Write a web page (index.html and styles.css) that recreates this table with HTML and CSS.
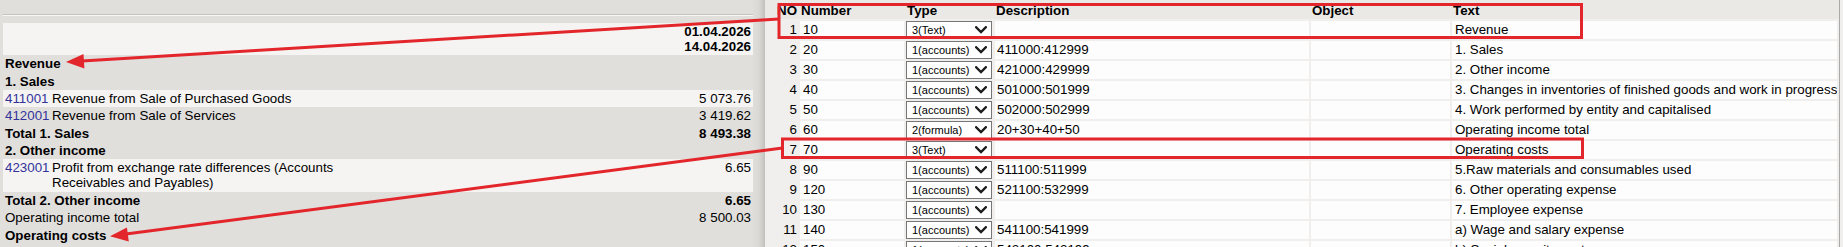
FILE: index.html
```html
<!DOCTYPE html>
<html lang="en">
<head>
<meta charset="utf-8">
<title>Report setup</title>
<link rel="stylesheet" href="styles.css">
</head>
<body>
<div class="page">
  <section class="report">
    <div class="report-inner">
      <div class="report-head"></div>
      <div class="rule"></div>
      <div class="dates band">
        <div>01.04.2026</div>
        <div>14.04.2026</div>
      </div>
      <div class="line b">Revenue</div>
      <div class="line b">1. Sales</div>
      <div class="line acc band"><span class="code">411001</span><span class="desc">Revenue from Sale of Purchased Goods</span><span class="val">5 073.76</span></div>
      <div class="line acc"><span class="code">412001</span><span class="desc">Revenue from Sale of Services</span><span class="val">3 419.62</span></div>
      <div class="line acc b"><span class="span2">Total 1. Sales</span><span class="val">8 493.38</span></div>
      <div class="line b">2. Other income</div>
      <div class="line acc band"><span class="code">423001</span><span class="desc">Profit from exchange rate differences (Accounts Receivables and Payables)</span><span class="val">6.65</span></div>
      <div class="line acc b"><span class="span2">Total 2. Other income</span><span class="val">6.65</span></div>
      <div class="line acc"><span class="span2">Operating income total</span><span class="val">8 500.03</span></div>
      <div class="line b">Operating costs</div>
    </div>
  </section>

  <section class="sheet">
    <div class="srow head">
      <div class="c no">NO</div>
      <div class="c">Number</div>
      <div class="c">Type</div>
      <div class="c">Description</div>
      <div class="c">Object</div>
      <div class="c">Text</div>
    </div>

    <div class="srow"><div class="c no">1</div><div class="c cell">10</div><div class="sel"><span>3(Text)</span><svg class="chev" viewBox="0 0 12 8"><path d="M1.2 1.2 L6 6 L10.8 1.2"/></svg></div><div class="c cell d"></div><div class="c cell"></div><div class="c cell">Revenue</div></div>
    <div class="srow"><div class="c no">2</div><div class="c cell">20</div><div class="sel"><span>1(accounts)</span><svg class="chev" viewBox="0 0 12 8"><path d="M1.2 1.2 L6 6 L10.8 1.2"/></svg></div><div class="c cell d">411000:412999</div><div class="c cell"></div><div class="c cell">1. Sales</div></div>
    <div class="srow"><div class="c no">3</div><div class="c cell">30</div><div class="sel"><span>1(accounts)</span><svg class="chev" viewBox="0 0 12 8"><path d="M1.2 1.2 L6 6 L10.8 1.2"/></svg></div><div class="c cell d">421000:429999</div><div class="c cell"></div><div class="c cell">2. Other income</div></div>
    <div class="srow"><div class="c no">4</div><div class="c cell">40</div><div class="sel"><span>1(accounts)</span><svg class="chev" viewBox="0 0 12 8"><path d="M1.2 1.2 L6 6 L10.8 1.2"/></svg></div><div class="c cell d">501000:501999</div><div class="c cell"></div><div class="c cell">3. Changes in inventories of finished goods and work in progress</div></div>
    <div class="srow"><div class="c no">5</div><div class="c cell">50</div><div class="sel"><span>1(accounts)</span><svg class="chev" viewBox="0 0 12 8"><path d="M1.2 1.2 L6 6 L10.8 1.2"/></svg></div><div class="c cell d">502000:502999</div><div class="c cell"></div><div class="c cell">4. Work performed by entity and capitalised</div></div>
    <div class="srow"><div class="c no">6</div><div class="c cell">60</div><div class="sel"><span>2(formula)</span><svg class="chev" viewBox="0 0 12 8"><path d="M1.2 1.2 L6 6 L10.8 1.2"/></svg></div><div class="c cell d">20+30+40+50</div><div class="c cell"></div><div class="c cell">Operating income total</div></div>
    <div class="srow"><div class="c no">7</div><div class="c cell">70</div><div class="sel"><span>3(Text)</span><svg class="chev" viewBox="0 0 12 8"><path d="M1.2 1.2 L6 6 L10.8 1.2"/></svg></div><div class="c cell d"></div><div class="c cell"></div><div class="c cell">Operating costs</div></div>
    <div class="srow"><div class="c no">8</div><div class="c cell">90</div><div class="sel"><span>1(accounts)</span><svg class="chev" viewBox="0 0 12 8"><path d="M1.2 1.2 L6 6 L10.8 1.2"/></svg></div><div class="c cell d">511100:511999</div><div class="c cell"></div><div class="c cell">5.Raw materials and consumables used</div></div>
    <div class="srow"><div class="c no">9</div><div class="c cell">120</div><div class="sel"><span>1(accounts)</span><svg class="chev" viewBox="0 0 12 8"><path d="M1.2 1.2 L6 6 L10.8 1.2"/></svg></div><div class="c cell d">521100:532999</div><div class="c cell"></div><div class="c cell">6. Other operating expense</div></div>
    <div class="srow"><div class="c no">10</div><div class="c cell">130</div><div class="sel"><span>1(accounts)</span><svg class="chev" viewBox="0 0 12 8"><path d="M1.2 1.2 L6 6 L10.8 1.2"/></svg></div><div class="c cell d"></div><div class="c cell"></div><div class="c cell">7. Employee expense</div></div>
    <div class="srow"><div class="c no">11</div><div class="c cell">140</div><div class="sel"><span>1(accounts)</span><svg class="chev" viewBox="0 0 12 8"><path d="M1.2 1.2 L6 6 L10.8 1.2"/></svg></div><div class="c cell d">541100:541999</div><div class="c cell"></div><div class="c cell">a) Wage and salary expense</div></div>
    <div class="srow"><div class="c no">12</div><div class="c cell">150</div><div class="sel"><span>1(accounts)</span><svg class="chev" viewBox="0 0 12 8"><path d="M1.2 1.2 L6 6 L10.8 1.2"/></svg></div><div class="c cell d">542100:542199</div><div class="c cell"></div><div class="c cell">b) Social security costs</div></div>
  </section>

  <svg class="marks" width="1843" height="247" viewBox="0 0 1843 247">
    <rect x="779" y="4.5" width="802.5" height="33" />
    <rect x="782.5" y="139" width="800" height="18.5" />
    <line x1="779" y1="19" x2="82" y2="61" />
    <polygon class="head" points="66,62 84.4,68.6 83.5,54" />
    <line x1="782.5" y1="148" x2="126" y2="234" />
    <polygon class="head" points="110,236.3 128.8,241.5 126.9,227.6" />
  </svg>
</div>
</body>
</html>
```

FILE: styles.css
```css
* { box-sizing: border-box; }

html, body {
  margin: 0;
  padding: 0;
  width: 1843px;
  height: 247px;
  overflow: hidden;
  background: #f0efed;
}

body {
  font-family: "Liberation Sans", Arial, sans-serif;
  font-size: 13.33px;
  color: #000;
}

.page {
  position: relative;
  display: flex;
  width: 1843px;
  height: 247px;
}

/* ---------- left report panel ---------- */
.report {
  width: 765px;
  height: 247px;
  flex: none;
  padding-left: 3px;
  background: linear-gradient(to left, #c6c5c1 0px, #d9d8d4 5px, #e0dfdc 12px, #e0dfdc 100%);
  border-right: 1px solid #c2c1bd;
}

.report-inner {
  width: 750px;
}

.report-head {
  height: 14px;
}

.rule {
  height: 2px;
  border-top: 1px solid #c4c3bf;
  border-bottom: 1px solid #f7f7f6;
  margin-bottom: 7px;
}

.band {
  background: #f5f4f2;
}

.dates {
  font-weight: bold;
  text-align: right;
  line-height: 15px;
  padding: 1px 2px 1px 0;
}

.line {
  line-height: 15px;
  padding: 1.2px 2px;
}

.line.b { font-weight: bold; }

.line.acc {
  display: grid;
  grid-template-columns: 47px 300px 1fr;
  padding-left: 2px;
  padding-right: 2px;
}

.code { color: #33339a; }

.span2 { grid-column: 1 / span 2; }

.val { text-align: right; }

/* ---------- right sheet ---------- */
.sheet {
  width: 1075px;
  height: 247px;
  flex: none;
  display: flex;
  flex-direction: column;
  gap: 2px;
  border-right: 1px solid #a9a9a9;
  background: #f0efed;
}

.srow {
  display: grid;
  grid-template-columns: 33px 104px 87px 314px 139px 385px;
  column-gap: 2px;
  height: 18px;
  flex: none;
}

.srow.head {
  height: 19px;
  background: #eae9e6;
  font-weight: bold;
}

.c {
  white-space: nowrap;
  overflow: hidden;
  line-height: 18px;
  padding: 0 3px;
}

.head .c {
  line-height: 15px;
  padding: 3px 1px 0;
}

.c.no {
  text-align: right;
  padding: 0 1px 0 0;
}

.head .c.no {
  padding: 3px 1px 0 0;
}

.cell { background: #fdfdfd; }
.cell.d { padding-left: 2px; }

.sel {
  width: 86px;
  height: 18px;
  border: 1px solid #767676;
  background: #fff;
  display: flex;
  align-items: center;
  justify-content: space-between;
  padding: 0 4px 0 5px;
  font-size: 11px;
  line-height: 16px;
}

.chev {
  width: 12px;
  height: 8px;
  fill: none;
  stroke: #1e1e1e;
  stroke-width: 2.3;
  stroke-linecap: square;
  flex: none;
}

/* ---------- red annotations ---------- */
.marks {
  position: absolute;
  left: 0;
  top: 0;
  pointer-events: none;
}

.marks rect,
.marks line {
  fill: none;
  stroke: #e3262b;
  stroke-width: 3;
}

.marks .head {
  fill: #e3262b;
  stroke: none;
}
```
